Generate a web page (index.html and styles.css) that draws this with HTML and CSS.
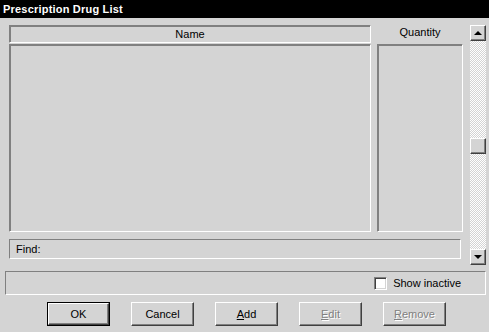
FILE: index.html
```html
<!DOCTYPE html>
<html lang="en">
<head>
    <meta charset="UTF-8">
    <title>Prescription Drug List</title>
    <link rel="stylesheet" href="styles.css">
</head>
<body>
    <div class="titlebar">Prescription Drug List</div>

    <div class="window">
        <div class="top-area">
            <div class="lists">
                <div class="col-header sunken">Name</div>
                <div class="col-label">Quantity</div>
                <div class="listbox sunken"></div>
                <div class="listbox sunken"></div>
                <div class="find sunken">Find:</div>
            </div>

            <div class="scrollbar">
                <div class="sb-btn raised"><span class="arrow up"></span></div>
                <div class="sb-track">
                    <div class="sb-thumb raised"></div>
                </div>
                <div class="sb-btn raised"><span class="arrow down"></span></div>
            </div>
        </div>

        <div class="status sunken">
            <label class="check"><span class="checkbox"></span>Show inactive</label>
        </div>

        <div class="buttons">
            <button class="btn default"><span class="btn-face">OK</span></button>
            <button class="btn"><span class="btn-face">Cancel</span></button>
            <button class="btn"><span class="btn-face"><u>A</u>dd</span></button>
            <button class="btn disabled"><span class="btn-face"><u>E</u>dit</span></button>
            <button class="btn disabled"><span class="btn-face"><u>R</u>emove</span></button>
        </div>
    </div>
</body>
</html>
```

FILE: styles.css
```css
* {
    box-sizing: border-box;
}
body {
    margin: 0;
    width: 489px;
    height: 332px;
    background: #d4d4d4;
    font-family: 'Liberation Sans', Arial, sans-serif;
    font-size: 11px;
    color: #000;
    overflow: hidden;
}
.titlebar {
    height: 18px;
    line-height: 18px;
    background: #000;
    color: #fff;
    font-weight: bold;
    font-size: 11px;
    letter-spacing: 0.2px;
    padding-left: 3px;
}
.window {
    padding: 7px 3px 0 5px;
}

/* 3d borders */
.sunken {
    border: 1px solid;
    border-color: #808080 #fff #fff #808080;
    box-shadow: inset 1px 1px 0 #808080;
}
.raised {
    border: 1px solid;
    border-color: #fff #404040 #404040 #fff;
    box-shadow: inset -1px -1px 0 #808080;
    background: #d4d4d4;
}

.top-area {
    display: flex;
    height: 240px;
}
.lists {
    margin-left: 4px;
    display: grid;
    grid-template-columns: 362px 86px;
    grid-template-rows: 18px 189px auto;
    column-gap: 6px;
    align-content: start;
}
.col-header {
    text-align: center;
    line-height: 16px;
}
.col-label {
    text-align: center;
    line-height: 14px;
}
.listbox {
    margin-top: 1px;
}
.find {
    grid-column: 1 / 3;
    width: 452px;
    height: 20px;
    margin-top: 7px;
    padding-left: 6px;
    line-height: 18px;
    box-shadow: none;
}

.scrollbar {
    margin-left: 7px;
    width: 16px;
    display: flex;
    flex-direction: column;
}
.sb-btn {
    height: 16px;
    display: flex;
    align-items: center;
    justify-content: center;
}
.sb-track {
    flex: 1;
    background: repeating-conic-gradient(#fff 0 25%, #d4d4d4 0 50%) 0 0 / 2px 2px;
}
.sb-thumb {
    height: 16px;
    margin-top: 97px;
}
.arrow {
    width: 0;
    height: 0;
    border-left: 4px solid transparent;
    border-right: 4px solid transparent;
}
.arrow.up {
    border-bottom: 4px solid #000;
}
.arrow.down {
    border-top: 4px solid #000;
}

.status {
    margin-top: 6px;
    width: 481px;
    height: 24px;
    display: flex;
    justify-content: flex-end;
    align-items: center;
    padding-right: 24px;
    box-shadow: none;
}
.check {
    display: flex;
    align-items: center;
    gap: 6px;
}
.checkbox {
    width: 13px;
    height: 13px;
    background: #fff;
    border: 1px solid;
    border-color: #808080 #fff #fff #808080;
    box-shadow: inset 1px 1px 0 #404040, inset -1px -1px 0 #d4d4d4;
}

.buttons {
    margin-top: 7px;
    padding-left: 42px;
    display: flex;
    gap: 21px;
}
.btn {
    width: 63px;
    height: 24px;
    padding: 0;
    font-family: inherit;
    font-size: 11px;
    color: #000;
    background: #d4d4d4;
    border: 1px solid;
    border-color: #fff #404040 #404040 #fff;
    box-shadow: inset -1px -1px 0 #808080;
}
.btn-face {
    display: block;
}
.btn.default {
    border: 1px solid #000;
    box-shadow: none;
}
.btn.default .btn-face {
    height: 100%;
    line-height: 20px;
    border: 1px solid;
    border-color: #fff #404040 #404040 #fff;
    box-shadow: inset -1px -1px 0 #808080;
}
.btn.disabled {
    color: #808080;
    text-shadow: 1px 1px 0 #fff;
}
```
